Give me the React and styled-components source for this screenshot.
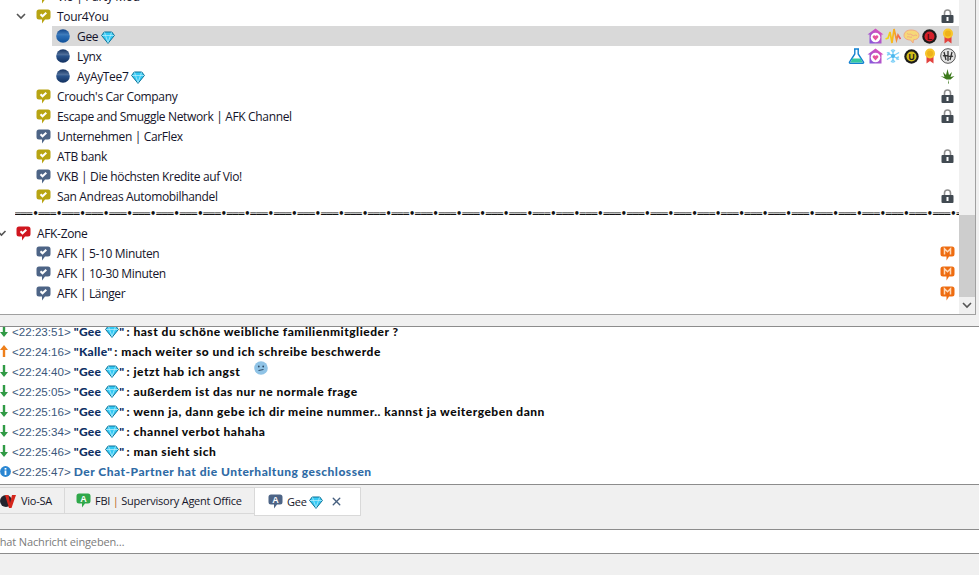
import styled, { createGlobalStyle } from "styled-components";
import { X } from "lucide-react";

const GlobalStyle = createGlobalStyle`
  html, body {
    margin: 0;
    padding: 0;
    background: #f0f0f0;
  }
`;

const Window = styled.div`
  width: 979px;
  height: 575px;
  overflow: hidden;
  display: flex;
  flex-direction: column;
  background: #f0f0f0;
  font-family: "Open Sans", "Noto Sans", sans-serif;
`;

const TreePanel = styled.div`
  width: 976px;
  height: 315px;
  flex: none;
  box-sizing: border-box;
  display: flex;
  background: #fff;
  border-right: 1px solid #a0a0a0;
  border-bottom: 1px solid #a0a0a0;
  overflow: hidden;
`;

const TreeList = styled.div`
  flex: 1;
  min-width: 0;
  margin-top: -14px;
`;

const Row = styled.div`
  display: flex;
  height: 20px;
`;

const Indent = styled.div`
  width: ${(p) => p.$level * 20 + 12}px;
  flex: none;
  display: flex;
  align-items: center;
  justify-content: flex-end;
  padding-right: ${(p) => (p.$level === 0 ? 5 : 6)}px;
  box-sizing: border-box;
`;

const Cell = styled.div`
  flex: 1;
  display: flex;
  align-items: center;
  padding-left: 4px;
  background: ${(p) => (p.$selected ? "#d9d9d9" : "transparent")};
`;

const Name = styled.span`
  display: inline-flex;
  align-items: center;
  gap: 3px;
  margin-left: 6px;
  font-size: 12px;
  letter-spacing: -0.34px;
  color: #14142a;
  white-space: nowrap;
`;

const Badges = styled.div`
  margin-left: auto;
  margin-right: 2px;
  display: flex;
  align-items: center;
  justify-content: flex-end;
`;

const Badge = styled.div`
  width: 18.2px;
  height: 16px;
  display: flex;
  align-items: center;
  justify-content: center;
`;

const SeparatorRow = styled.div`
  height: 17px;
  margin-left: 15px;
  overflow: hidden;
  font-family: "DejaVu Sans", sans-serif;
  font-size: 9.63px;
  font-weight: 700;
  line-height: 16px;
  color: #111;
  white-space: nowrap;
`;

const ScrollBar = styled.div`
  width: 16px;
  flex: none;
  display: flex;
  flex-direction: column;
  background: #f0f0f0;
  padding-top: 215px;
`;

const Thumb = styled.div`
  height: 82px;
  background: #cdcdcd;
`;

const ScrollArrow = styled.div`
  flex: 1;
  display: flex;
  align-items: center;
  justify-content: center;
`;

const Splitter = styled.div`
  height: 11px;
  flex: none;
  background: #f0f0f0;
  border-bottom: 1px solid #8c8c8c;
`;

const Chat = styled.div`
  height: 157px;
  flex: none;
  overflow: hidden;
  background: #fff;
  border-bottom: 1px solid #8c8c8c;
`;

const ChatList = styled.div`
  margin-top: -6px;
`;

const ChatRow = styled.div`
  height: 20px;
  display: flex;
  align-items: center;
  white-space: pre;
`;

const DirectionCell = styled.div`
  width: 12px;
  flex: none;
  display: flex;
  justify-content: flex-start;
`;

const Time = styled.span`
  font-family: "Liberation Sans", sans-serif;
  font-size: 11.6px;
  color: #3c587c;
  margin-right: 3px;
`;

const Sender = styled.span`
  display: inline-flex;
  align-items: center;
  margin-right: 2px;
  font-family: Lato, "Open Sans", sans-serif;
  font-weight: 900;
  font-size: 12px;
  letter-spacing: 0.3px;
  color: #0e2f63;
`;

const Message = styled.span`
  font-family: Lato, "Open Sans", sans-serif;
  font-weight: 900;
  font-size: 12px;
  color: ${(p) => (p.$system ? "#2f6ba5" : "#0c0c0c")};
  letter-spacing: 0.5px;
`;

const Smiley = styled.span`
  margin-left: 14px;
  margin-top: -6px;
  display: inline-flex;
`;

const TabBar = styled.div`
  height: 44px;
  flex: none;
  box-sizing: border-box;
  padding-top: 2px;
  display: flex;
  align-items: flex-start;
  background: #f0f0f0;
`;

const Tab = styled.div`
  height: ${(p) => (p.$active ? 29 : 27)}px;
  width: ${(p) => p.$width}px;
  box-sizing: border-box;
  flex: none;
  display: flex;
  align-items: center;
  gap: 4px;
  padding-left: ${(p) => p.$pad}px;
  font-size: 11px;
  letter-spacing: -0.23px;
  color: #16162a;
  white-space: nowrap;
  background: ${(p) => (p.$active ? "#fff" : "#f0f0f0")};
  border: 1px solid #d9d9d9;
  border-left-width: ${(p) => (p.$first ? 0 : 1)}px;
  border-right-width: ${(p) => (p.$active ? 1 : 0)}px;
`;

const Pipe = styled.span`
  color: #b5651d;
`;

const CloseIcon = styled(X)`
  margin-left: 3px;
  color: #47607f;
`;

const InputBox = styled.div`
  height: 25px;
  flex: none;
  box-sizing: border-box;
  background: #fff;
  border-top: 1px solid #8c8c8c;
  border-bottom: 1px solid #8c8c8c;
  overflow: hidden;
  display: flex;
  align-items: center;
`;

const Placeholder = styled.span`
  margin-left: -7px;
  font-size: 11px;
  letter-spacing: -0.15px;
  color: #7b7b7b;
`;

const Svg = styled.svg`
  flex: none;
  display: block;
`;

const InlineSvg = styled(Svg)`
  margin: ${(p) => p.$margin || "0"};
`;

function ChannelIcon({ color = "#b7a412", letter }) {
  return (
    <Svg width="15" height="15" viewBox="0 0 15 15">
      <path
        d="M3 .5h9a2.500 2.500 0 0 1 2.500 2.500v5a2.500 2.500 0 0 1-2.500 2.500H9l-3 4v-4H3A2.500 2.500 0 0 1 .5 8V3A2.500 2.500 0 0 1 3 .5z"
        fill={color}
      />
      {letter ? (
        <text x="7.500" y="9" textAnchor="middle" fontSize="9" fontWeight="700" fontFamily="Liberation Sans" fill="#fff">
          {letter}
        </text>
      ) : (
        <path d="M4.500 5.300l2 2 3.800-3.600" fill="none" stroke="#fff" strokeWidth="2" />
      )}
    </Svg>
  );
}

function Diamond({ margin }) {
  return (
    <InlineSvg width="14" height="13" viewBox="0 0 14 13" $margin={margin}>
      <path d="M3.200 1h7.600L13.400 4.500 7 12.400.6 4.500z" fill="#35c9f4" stroke="#0d7196" strokeWidth="1" />
      <path d="M1 4.500h12M4.500 4.500L7 11.500l2.500-7M3.500 1.300l1 3.200M10.500 1.300l-1 3.200" fill="none" stroke="#bff0fd" strokeWidth=".7" />
    </InlineSvg>
  );
}

function Ball({ bright }) {
  const id = bright ? "ballBright" : "ballDark";
  return (
    <Svg width="15" height="14" viewBox="0 0 15 14">
      <defs>
        <linearGradient id={id} x1="0" y1="0" x2="0" y2="1">
          <stop offset="0" stopColor={bright ? "#0f4287" : "#12305f"} />
          <stop offset=".4" stopColor={bright ? "#3f7cbc" : "#4f6f9b"} />
          <stop offset=".5" stopColor={bright ? "#2c6fb6" : "#2a548c"} />
          <stop offset="1" stopColor={bright ? "#0f5099" : "#12305f"} />
        </linearGradient>
      </defs>
      <circle cx="7" cy="7" r="6.800" fill={`url(#${id})`} />
    </Svg>
  );
}

function Lock() {
  return (
    <Svg width="13" height="14" viewBox="0 0 13 14">
      <path d="M3.500 6V4a3 3 0 0 1 6 0v2" fill="none" stroke="#8f8f8f" strokeWidth="1.600" />
      <rect x="0.500" y="6" width="12" height="8" rx="1" fill="#414a52" />
      <rect x="5.500" y="8" width="2" height="4" fill="#fff" />
    </Svg>
  );
}

function OrangeM() {
  return (
    <Svg width="15" height="15" viewBox="0 0 15 15">
      <path d="M3 .5h9A2.500 2.500 0 0 1 14.500 3v5A2.500 2.500 0 0 1 12 10.500H9l-2.500 4v-4H3A2.500 2.500 0 0 1 .5 8V3A2.500 2.500 0 0 1 3 .5z" fill="#ee6c10" />
      <path d="M4.500 8.500V2.700l3 3 3-3v5.800" fill="none" stroke="#ffd9b8" strokeWidth="1.500" />
    </Svg>
  );
}

function House() {
  return (
    <Svg width="17" height="16" viewBox="0 0 17 16">
      <defs>
        <linearGradient id="houseFill" x1="1" y1="0" x2="0" y2="1">
          <stop offset="0" stopColor="#f14db3" />
          <stop offset="1" stopColor="#7a5ae0" />
        </linearGradient>
      </defs>
      <path d="M8.500.5L16.500 6.500h-2V15.500H2.500V6.500H.5z" fill="url(#houseFill)" />
      <circle cx="8.500" cy="9.500" r="4.800" fill="#fff" />
      <path d="M8.500 12.500L5.800 9.600a1.600 1.600 0 0 1 2.700-1.700 1.600 1.600 0 0 1 2.700 1.700z" fill="#e4559f" />
    </Svg>
  );
}

function Pulse() {
  return (
    <Svg width="16" height="16" viewBox="0 0 16 16">
      <defs>
        <linearGradient id="pulseLine" x1="0" y1="0" x2="1" y2="0">
          <stop offset="0" stopColor="#f3df10" />
          <stop offset=".55" stopColor="#f7b21d" />
          <stop offset="1" stopColor="#ee4d64" />
        </linearGradient>
      </defs>
      <path d="M0.500 11L3 10 5 4l2 11 2-14 2.500 11 1.500-5 2.500 4" fill="none" stroke="url(#pulseLine)" strokeWidth="1.700" />
    </Svg>
  );
}

function Brain() {
  return (
    <Svg width="17" height="15" viewBox="0 0 17 15">
      <path d="M1 6.500C1 3 4 1 8 1c4.500 0 8 2 8 5.500 0 3-3 4.300-5.500 4.300L10 14l-2.500-3C4 11 1 9.500 1 6.500z" fill="#f6d878" stroke="#f1a986" strokeWidth="1" />
      <path d="M4 4.500c2 2 3-.5 5 1.500s3-1 5 .5M4 8c2-1 3 1 5 0" fill="none" stroke="#f1a986" strokeWidth="1" />
    </Svg>
  );
}

function RingLetter({ letter, fill, ring }) {
  return (
    <Svg width="15" height="15" viewBox="0 0 15 15">
      <circle cx="7.500" cy="7.500" r="7.200" fill="#1b1b1b" />
      <circle cx="7.500" cy="7.500" r="5" fill={ring} />
      <text x="7.500" y="10.500" textAnchor="middle" fontSize="8.500" fontWeight="700" fontFamily="Liberation Sans" fill={fill}>
        {letter}
      </text>
    </Svg>
  );
}

function Medal() {
  return (
    <Svg width="12" height="16" viewBox="0 0 12 16">
      <path d="M2.500 8h7v7.500L6 13l-3.500 2.500z" fill="#e2433f" />
      <circle cx="6" cy="5.500" r="5" fill="#f7c62c" />
      <circle cx="6" cy="5.500" r="3" fill="#eeb21b" />
    </Svg>
  );
}

function Flask() {
  return (
    <Svg width="17" height="16" viewBox="0 0 17 16">
      <path d="M6 1h5M6.800 1v5L1.500 14a.8.8 0 0 0 .7 1.200h12.600a.8.8 0 0 0 .7-1.200L10.200 6V1" fill="#fff" stroke="#1281d1" strokeWidth="1.400" />
      <path d="M4.300 10.500h8.400l2 4H2.500z" fill="#35c9a0" />
    </Svg>
  );
}

function Snow() {
  return (
    <Svg width="16" height="16" viewBox="0 0 16 16">
      <g stroke="#7fd0f7" strokeWidth="1.300" fill="none">
        <path d="M8 1v14M1.900 4.500l12.200 7M14.100 4.500L1.900 11.500" />
        <path d="M6 2l2 2 2-2M6 14l2-2 2 2M2 7l2.500-.7L3.600 4M14 9l-2.500.7.900 2.300" />
      </g>
      <circle cx="8" cy="8" r="2" fill="#4cb7ee" />
    </Svg>
  );
}

function Seal() {
  return (
    <Svg width="16" height="16" viewBox="0 0 16 16">
      <circle cx="8" cy="8" r="7.300" fill="#e4e4e4" stroke="#555" strokeWidth="1" />
      <path d="M4 4l2 8M8 3v10M12 4l-2 8M3 8c3-2 7 2 10 0" fill="none" stroke="#333" strokeWidth="1.300" />
    </Svg>
  );
}

function Leaf() {
  return (
    <Svg width="15" height="15" viewBox="0 0 15 15">
      <path d="M7.500 0l1.500 6 3-3-1.500 5 4-1-4 3.500h-2l.5 4h-1l.5-4h-2L.5 7l4 1L3 3l3 3z" fill="#3d7a1c" />
    </Svg>
  );
}

function Chevron({ small }) {
  return (
    <Svg width={small ? 8 : 10} height="7" viewBox={small ? "0 0 8 7" : "0 0 10 7"}>
      <path d={small ? "M.5 3l2 2 4-4" : "M1 1l4 4 4-4"} fill="none" stroke="#555" strokeWidth="1.600" />
    </Svg>
  );
}

function Arrow({ up }) {
  return (
    <Svg width="8" height="12" viewBox="0 0 8 12">
      <path
        d={up ? "M4 0l4 5H5.200v7H2.800V5H0z" : "M2.800 0h2.400v7H8l-4 5-4-5h2.800z"}
        fill={up ? "#ee7f1a" : "#2f9a45"}
      />
    </Svg>
  );
}

function Info() {
  return (
    <Svg width="11" height="11" viewBox="0 0 11 11">
      <circle cx="5.500" cy="5.500" r="5.400" fill="#2a86d2" />
      <rect x="4.600" y="4.500" width="1.800" height="4.500" fill="#fff" />
      <rect x="4.600" y="2" width="1.800" height="1.600" fill="#fff" />
    </Svg>
  );
}

function Face() {
  return (
    <Svg width="14" height="14" viewBox="0 0 14 14">
      <circle cx="7" cy="7" r="6.800" fill="#8fc3e6" />
      <circle cx="4.800" cy="5.500" r=".9" fill="#2b4a66" />
      <circle cx="9.200" cy="5.500" r=".9" fill="#2b4a66" />
      <path d="M4.500 9.500l5-1" stroke="#2b4a66" strokeWidth="1" />
    </Svg>
  );
}

function ViolentLogo() {
  return (
    <Svg width="17" height="16" viewBox="0 0 17 16">
      <circle cx="6" cy="8" r="6" fill="#23242e" />
      <path d="M5 2h3.500l1.500 8 2-8h4l-4.500 13H9z" fill="#d5261c" />
    </Svg>
  );
}

const channels = [
  { name: "Crouch's Car Company", color: "#b7a412", lock: true },
  { name: "Escape and Smuggle Network | AFK Channel", color: "#b7a412", lock: true },
  { name: "Unternehmen | CarFlex", color: "#4d6486" },
  { name: "ATB bank", color: "#b7a412", lock: true },
  { name: "VKB | Die höchsten Kredite auf Vio!", color: "#4d6486" },
  { name: "San Andreas Automobilhandel", color: "#b7a412", lock: true },
];

const afkChannels = ["AFK | 5-10 Minuten", "AFK | 10-30 Minuten", "AFK | Länger"];

const chatLines = [
  { time: "22:23:51", text: "hast du schöne weibliche familienmitglieder ?" },
  { time: "22:24:16", sender: "Kalle", up: true, text: "mach weiter so und ich schreibe beschwerde" },
  { time: "22:24:40", text: "jetzt hab ich angst", smiley: true },
  { time: "22:25:05", text: "außerdem ist das nur ne normale frage" },
  { time: "22:25:16", text: "wenn ja, dann gebe ich dir meine nummer.. kannst ja weitergeben dann" },
  { time: "22:25:34", text: "channel verbot hahaha" },
  { time: "22:25:46", text: "man sieht sich" },
];

function TreeRow({ level, twisty, icon, name, diamond, selected, badges }) {
  return (
    <Row>
      <Indent $level={level}>{twisty}</Indent>
      <Cell $selected={selected}>
        {icon}
        <Name>
          {name}
          {diamond && <Diamond margin="3px 0 0 0" />}
        </Name>
        {badges && (
          <Badges>
            {badges.map((badge, i) => (
              <Badge key={i}>{badge}</Badge>
            ))}
          </Badges>
        )}
      </Cell>
    </Row>
  );
}

function App() {
  return (
    <Window>
      <GlobalStyle />
      <TreePanel>
        <TreeList>
          <TreeRow level={1} icon={<ChannelIcon />} name="Vio | Party Mod" />
          <TreeRow level={1} twisty={<Chevron />} icon={<ChannelIcon />} name="Tour4You" badges={[<Lock />]} />
          <TreeRow
            level={2}
            selected
            icon={<Ball bright />}
            name="Gee"
            diamond
            badges={[<House />, <Pulse />, <Brain />, <RingLetter letter="L" fill="#5a0a0a" ring="#d5202a" />, <Medal />]}
          />
          <TreeRow
            level={2}
            icon={<Ball />}
            name="Lynx"
            badges={[<Flask />, <House />, <Snow />, <RingLetter letter="U" fill="#222" ring="#d2bd1a" />, <Medal />, <Seal />]}
          />
          <TreeRow level={2} icon={<Ball />} name="AyAyTee7" diamond badges={[<Leaf />]} />
          {channels.map((channel) => (
            <TreeRow
              key={channel.name}
              level={1}
              icon={<ChannelIcon color={channel.color} />}
              name={channel.name}
              badges={channel.lock ? [<Lock />] : null}
            />
          ))}
          <SeparatorRow>{"═══•".repeat(41)}</SeparatorRow>
          <TreeRow level={0} twisty={<Chevron small />} icon={<ChannelIcon color="#d0161f" />} name="AFK-Zone" />
          {afkChannels.map((name) => (
            <TreeRow key={name} level={1} icon={<ChannelIcon color="#4d6486" />} name={name} badges={[<OrangeM />]} />
          ))}
        </TreeList>
        <ScrollBar>
          <Thumb />
          <ScrollArrow>
            <Chevron />
          </ScrollArrow>
        </ScrollBar>
      </TreePanel>
      <Splitter />
      <Chat>
        <ChatList>
          {chatLines.map((line) => (
            <ChatRow key={line.time}>
              <DirectionCell>
                <Arrow up={line.up} />
              </DirectionCell>
              <Time>&lt;{line.time}&gt;</Time>
              <Sender>
                "{line.sender || "Gee"}
                {!line.sender && <Diamond margin="0 0 0 4px" />}"
              </Sender>
              <Message>: {line.text}</Message>
              {line.smiley && (
                <Smiley>
                  <Face />
                </Smiley>
              )}
            </ChatRow>
          ))}
          <ChatRow>
            <DirectionCell>
              <Info />
            </DirectionCell>
            <Time>&lt;22:25:47&gt;</Time>
            <Message $system>Der Chat-Partner hat die Unterhaltung geschlossen</Message>
          </ChatRow>
        </ChatList>
      </Chat>
      <TabBar>
        <Tab $width={64} $pad={0} $first>
          <ViolentLogo />
          Vio-SA
        </Tab>
        <Tab $width={190} $pad={11}>
          <ChannelIcon color="#2fa84a" letter="A" />
          <span>
            FBI <Pipe>|</Pipe> Supervisory Agent Office
          </span>
        </Tab>
        <Tab $width={107} $pad={13} $active>
          <ChannelIcon color="#4d6486" letter="A" />
          Gee <Diamond margin="2px 0 0 -2px" />
          <CloseIcon size={13} strokeWidth={2.6} />
        </Tab>
      </TabBar>
      <InputBox>
        <Placeholder>Chat Nachricht eingeben…</Placeholder>
      </InputBox>
    </Window>
  );
}

export default App;
